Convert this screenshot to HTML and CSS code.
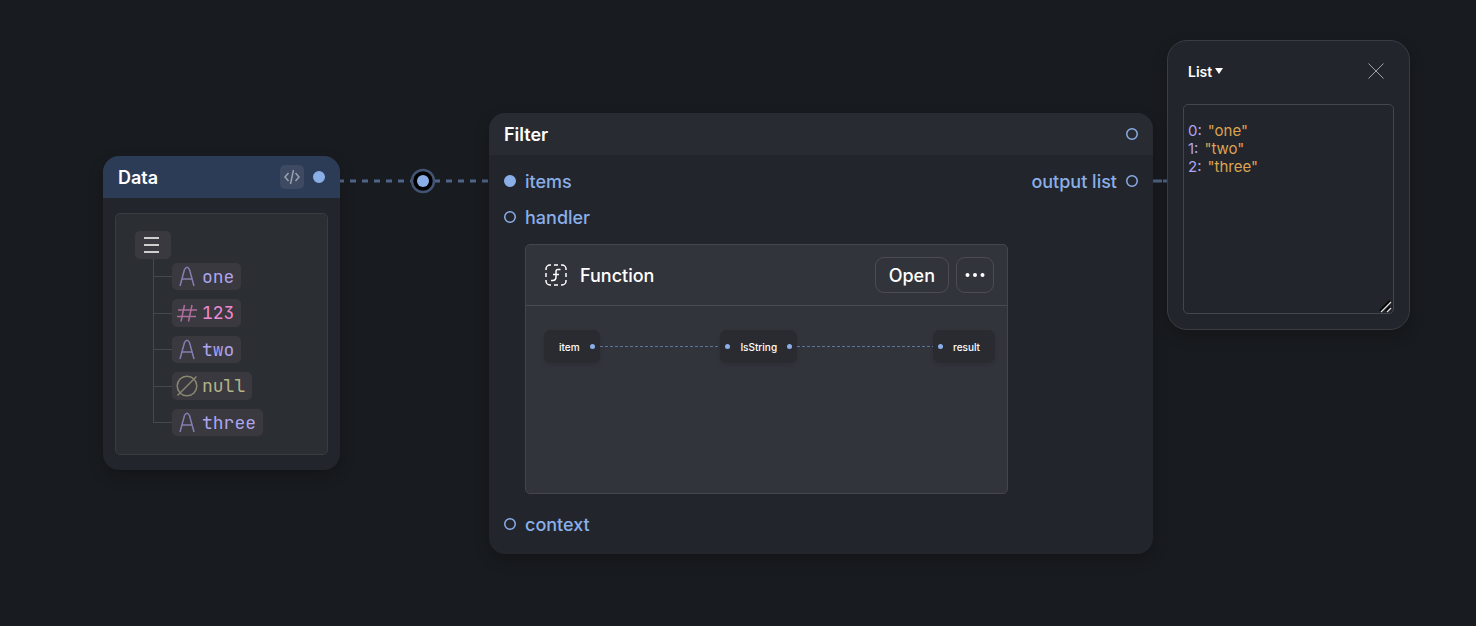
FILE: index.html
```
<!DOCTYPE html>
<html lang="en">
<head>
  <meta charset="UTF-8">
  <meta name="viewport" content="width=device-width, initial-scale=1.0">
  <title>Filter</title>
  <link rel="stylesheet" href="styles.css">
</head>
<body>
  <main class="canvas">
    <svg class="wires" aria-hidden="true">
      <line class="wire" x1="340" y1="181" x2="489" y2="181" />
      <line class="wire wire-long" x1="1153" y1="181" x2="1168" y2="181" />
      <circle class="junction" cx="423" cy="181" r="11" />
      <circle class="junction-dot" cx="423" cy="181" r="6" />
    </svg>

    <section class="node node-data">
      <header class="node-header header-blue">
        <h2>Data</h2>
        <button class="code-button" type="button" aria-label="Edit as code">
          <svg width="18" height="16" viewBox="0 0 18 16">
            <path d="M5.500 4L2 8l3.500 4M12.500 4L16 8l-3.500 4M10.500 1L7.500 15" />
          </svg>
        </button>
        <svg class="port filled" width="12" height="12"><circle cx="6" cy="6" r="5.250" /></svg>
      </header>
      <div class="node-body data-body">
        <div class="tree">
          <button class="chip chip-root" type="button" aria-label="List">
            <svg width="16" height="18" viewBox="0 0 16 18">
              <path d="M0 2h15M0 9h15M0 16h15" />
            </svg>
          </button>
          <ul>
            <li><span class="chip string"><svg width="22" height="23" viewBox="0 0 22 23"><path d="M4 21L8.500 4.500Q11 0 13.500 4.500L18 21M5.500 14h11" /></svg>one</span></li>
            <li><span class="chip number"><svg width="22" height="24" viewBox="0 0 22 24"><path d="M8.500 4L5 20.500M16 4l-3.500 16.500M2 9h19M1 15.500h19" /></svg>123</span></li>
            <li><span class="chip string"><svg width="22" height="23" viewBox="0 0 22 23"><path d="M4 21L8.500 4.500Q11 0 13.500 4.500L18 21M5.500 14h11" /></svg>two</span></li>
            <li><span class="chip null"><svg width="22" height="24" viewBox="0 0 22 24"><circle cx="11" cy="12" r="9.800" /><path d="M1.500 21.500L20.500 2.500" /></svg>null</span></li>
            <li><span class="chip string"><svg width="22" height="23" viewBox="0 0 22 23"><path d="M4 21L8.500 4.500Q11 0 13.500 4.500L18 21M5.500 14h11" /></svg>three</span></li>
          </ul>
        </div>
      </div>
    </section>

    <section class="node node-filter">
      <header class="node-header">
        <h2>Filter</h2>
        <svg class="port" width="12" height="12"><circle cx="6" cy="6" r="5.250" /></svg>
      </header>
      <div class="node-body">
        <div class="row">
          <svg class="port filled" width="12" height="12"><circle cx="6" cy="6" r="5.250" /></svg>
          <span>items</span>
          <span class="output">output list</span>
          <svg class="port" width="12" height="12"><circle cx="6" cy="6" r="5.250" /></svg>
        </div>
        <div class="row">
          <svg class="port" width="12" height="12"><circle cx="6" cy="6" r="5.250" /></svg>
          <span>handler</span>
        </div>
        <div class="function">
          <div class="function-header">
            <svg class="function-icon" width="22" height="22" viewBox="0 0 22 22">
              <path d="M1 6V5a4 4 0 0 1 4-4h1M9 1h4M16 1h1a4 4 0 0 1 4 4v1M21 9v4M21 16v1a4 4 0 0 1-4 4h-1M13 21H9M6 21H5a4 4 0 0 1-4-4v-1M1 13V9" />
              <path d="M15.500 5.500H13q-2 0-2 2V13q0 3.500-3.500 3.500H6M8 10.500h6" />
            </svg>
            <h3>Function</h3>
            <button class="outline-button open" type="button">Open</button>
            <button class="outline-button more" type="button" aria-label="More">
              <svg width="20" height="6" viewBox="0 0 20 6">
                <circle cx="2.500" cy="3" r="2" /><circle cx="10" cy="3" r="2" /><circle cx="17.500" cy="3" r="2" />
              </svg>
            </button>
          </div>
          <div class="function-graph">
            <div class="mini mini-start">item<i></i></div>
            <div class="mini-wire"></div>
            <div class="mini mini-middle"><i></i>IsString<i></i></div>
            <div class="mini-wire mini-wire-end"></div>
            <div class="mini mini-end"><i></i>result</div>
          </div>
        </div>
        <div class="row">
          <svg class="port" width="12" height="12"><circle cx="6" cy="6" r="5.250" /></svg>
          <span>context</span>
        </div>
      </div>
    </section>

    <section class="inspector">
      <header class="inspector-header">
        <button class="type-button" type="button">List<svg width="8" height="6" viewBox="0 0 8 6"><path d="M0 0h8L4 6z" /></svg></button>
        <button class="close-button" type="button" aria-label="Close">
          <svg width="16" height="16" viewBox="0 0 16 16"><path d="M0.500 0.500l15 15M15.500 0.500l-15 15" /></svg>
        </button>
      </header>
      <div class="inspector-value">
        <div class="entry"><span>0:</span><span class="value">"one"</span></div>
        <div class="entry"><span>1:</span><span class="value">"two"</span></div>
        <div class="entry"><span>2:</span><span class="value">"three"</span></div>
      </div>
    </section>
  </main>
</body>
</html>
```

FILE: styles.css
```
* {
  box-sizing: border-box;
}
body {
  margin: 0;
  background-color: #181b1f;
  color: #fff;
  font-family: Inter, sans-serif;
  font-size: 18px;
  font-weight: 500;
}
h2, h3 {
  margin: 0;
  font-size: 18px;
}
h2 {
  font-weight: 600;
}
h3 {
  font-weight: 500;
}
button {
  padding: 0;
  border: none;
  background: none;
  color: inherit;
  font: inherit;
  cursor: pointer;
}
svg {
  fill: none;
  stroke: currentColor;
}

/* canvas */
.canvas {
  position: relative;
  min-height: 100vh;
  overflow: hidden;
}
.wires {
  position: absolute;
  inset: 0;
  width: 100%;
  height: 100%;
}
.wire {
  stroke: #4f6486;
  stroke-width: 3;
  stroke-dasharray: 6 6;
  stroke-dashoffset: 2;
}
.wire-long {
  stroke-dasharray: 9 1;
  stroke-dashoffset: 0;
}
.junction {
  fill: #000;
  stroke: #435472;
  stroke-width: 2.5;
}
.junction-dot {
  fill: #8aafe8;
  stroke: none;
}

/* nodes */
.node {
  position: absolute;
  border-radius: 16px;
  background-color: #22252c;
  box-shadow: 0 6px 16px rgba(0, 0, 0, 0.2);
  overflow: hidden;
}
.node-data {
  left: 103px;
  top: 156px;
  width: 237px;
}
.node-filter {
  left: 489px;
  top: 113px;
  width: 664px;
}
.node-header {
  display: flex;
  align-items: center;
  gap: 9px;
  height: 42px;
  padding: 0 15px;
  background-color: #292b32;
  line-height: 21px;
}
.node-header h2 {
  flex: 1;
}
.header-blue {
  background-color: #2d3c56;
}
.port {
  stroke: #8aafe8;
  stroke-width: 1.5;
}
.filled {
  fill: #8aafe8;
}
.code-button {
  display: flex;
  align-items: center;
  justify-content: center;
  width: 24px;
  height: 24px;
  border-radius: 5px;
  background-color: #3d4a62;
  color: #98a1ae;
}
.code-button svg {
  stroke-width: 1.5;
}

/* data tree */
.data-body {
  padding: 15px 12px;
}
.tree {
  padding: 17px 19px 18px;
  border: 1px solid #3a3c40;
  border-radius: 5px;
  background-color: #2b2e32;
}
.chip {
  display: inline-flex;
  align-items: center;
  gap: 4px;
  padding: 2px 7px 2px 4px;
  border-radius: 5px;
  background-color: #39393f;
  font-family: "JetBrains Mono", "DejaVu Sans Mono", monospace;
  font-weight: 400;
  line-height: 20px;
}
.chip svg {
  stroke-width: 1.5;
  opacity: 0.65;
}
.chip-root {
  display: flex;
  justify-content: center;
  width: 36px;
  height: 28px;
}
.chip-root svg {
  opacity: 1;
}
.tree ul {
  display: flex;
  flex-direction: column;
  gap: 9px;
  margin: 0 0 0 18px;
  padding: 4px 0 0;
  list-style: none;
  background: linear-gradient(#47484c, #47484c) no-repeat;
  background-size: 1px calc(100% - 13px);
}
.tree li {
  display: flex;
  align-items: center;
}
.tree li::before {
  content: "";
  width: 19px;
  height: 1px;
  background-color: #47484c;
}
.string {
  color: #b0a4ee;
}
.number {
  color: #ee8ad2;
}
.null {
  color: #b5b288;
}

/* filter */
.node-filter .node-body {
  padding: 8px 15px 12px;
}
.row {
  display: flex;
  align-items: center;
  gap: 9px;
  height: 36px;
  color: #8aafe8;
  line-height: 21px;
}
.output {
  margin-left: auto;
}
.function {
  width: 483px;
  margin: 9px 0 12px 21px;
  border: 1px solid #45464a;
  border-radius: 5px;
  background-color: #32343b;
}
.function-header {
  display: flex;
  align-items: center;
  gap: 7px;
  padding: 12px 13px 12px 19px;
  border-bottom: 1px solid #4a4b4f;
  line-height: 21px;
}
.function-header h3 {
  flex: 1;
  padding-left: 6px;
}
.function-icon {
  stroke-width: 1.5;
}
.outline-button {
  height: 36px;
  border: 1px solid #4c4d51;
  border-radius: 9px;
}
.open {
  padding: 0 13px;
}
.more {
  display: flex;
  align-items: center;
  padding: 0 8px;
}
.more svg {
  fill: currentColor;
  stroke: none;
}
.function-graph {
  display: flex;
  align-items: center;
  padding: 24px 12px 130px 18px;
}
.mini {
  display: flex;
  align-items: center;
  gap: 10px;
  height: 33px;
  padding: 0 5px;
  border-radius: 7px;
  background-color: #292b31;
  box-shadow: 0 2px 4px rgba(0, 0, 0, 0.1);
  font-size: 10px;
  line-height: 12px;
}
.mini-start {
  padding-left: 15px;
}
.mini-end {
  padding-right: 15px;
}
.mini i {
  width: 5px;
  height: 5px;
  border-radius: 50%;
  background-color: #8aafe8;
}
.mini-wire {
  flex: 8;
  height: 1px;
  background: repeating-linear-gradient(to right, #5d7399 0 3px, transparent 3px 5px);
}
.mini-wire-end {
  flex: 9;
}

/* inspector */
.inspector {
  position: absolute;
  left: 1167px;
  top: 40px;
  padding: 15px;
  border: 1px solid #3a3c41;
  border-radius: 20px;
  background-color: #22252c;
  box-shadow: 0 6px 16px rgba(0, 0, 0, 0.2);
}
.inspector-header {
  display: flex;
  align-items: center;
  justify-content: space-between;
  height: 30px;
  margin-bottom: 18px;
  padding: 0 10px 0 5px;
}
.type-button {
  display: flex;
  align-items: center;
  gap: 3px;
  font-size: 14px;
  font-weight: 600;
}
.type-button svg {
  fill: currentColor;
  stroke: none;
}
.close-button {
  display: flex;
  color: #a0a1a5;
}
.inspector-value {
  width: 211px;
  height: 210px;
  padding: 17px 4px;
  border: 1px solid #45464a;
  border-radius: 5px;
  overflow: auto;
  resize: both;
  color: #b0a4ee;
  font-size: 15px;
  font-weight: 400;
  line-height: 18px;
}
.inspector-value::-webkit-resizer {
  background: url("data:image/svg+xml,%3Csvg xmlns='http://www.w3.org/2000/svg' width='15' height='15'%3E%3Cpath d='M2 13L12 3M8 13l4-4' stroke='%23000' stroke-width='2'/%3E%3Cpath d='M3 14L13 4M9 14l4-4' stroke='%23ddd' stroke-width='1.3'/%3E%3C/svg%3E") no-repeat bottom right;
}
.entry {
  display: flex;
  gap: 6px;
}
.value {
  color: #dca452;
}
```
